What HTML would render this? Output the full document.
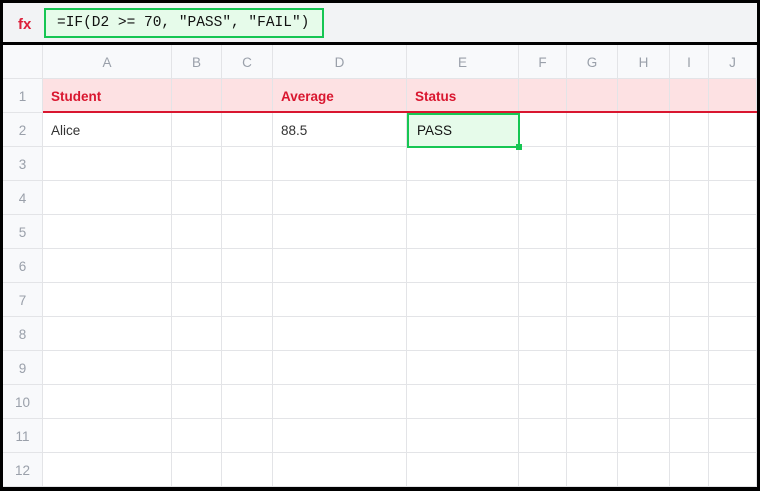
<!DOCTYPE html>
<html><head><meta charset="utf-8"><style>
*{margin:0;padding:0;box-sizing:border-box}
body{width:760px;height:491px;background:#000;position:relative;overflow:hidden;font-family:"Liberation Sans",sans-serif}
#fb{position:absolute;left:3px;top:3px;width:754px;height:39px;background:#f2f3f5}
#fx{position:absolute;left:15px;top:13px;color:#dc1f3a;font-weight:bold;font-size:15px}
#formula{position:absolute;left:44px;top:8px;width:280px;height:30px;border:2px solid #16c653;background:#e6fbea;font-family:"Liberation Mono",monospace;font-size:14.5px;line-height:27px;padding-left:11px;color:#111;white-space:nowrap;overflow:hidden}
#grid{position:absolute;left:3px;top:45px;width:754px;height:442px;background:#fff;overflow:hidden}
.c{position:absolute;border-right:1px solid #e3e4e7;border-bottom:1px solid #e3e4e7;font-size:13.5px;line-height:35px}
.h{background:#f8f9fb;color:#9aa0aa;text-align:center}
.r1{background:#fde1e3;color:#d9162f;font-weight:bold;padding-left:8px}
.d{color:#333;padding-left:8px}
</style></head><body>
<div id="fb"><div id="fx">fx</div></div>
<div id="formula">=IF(D2 &gt;= 70, "PASS", "FAIL")</div>
<div id="grid"></div>
<script>
var xs=[0,40,169,219,270,404,516,564,615,667,706,754];
var ys=[0,34,68,102,136,170,204,238,272,306,340,374,408,442];
var L="ABCDEFGHIJ",g=document.getElementById('grid'),h='';
var data={"1,1":"Student","1,4":"Average","1,5":"Status","2,1":"Alice","2,4":"88.5"};
for(var r=0;r<13;r++)for(var c=0;c<11;c++){
 var cls='c',t='';
 if(r==0||c==0){cls+=' h';t=r==0?(c?L[c-1]:''):r;}
 else if(r==1){cls+=' r1';t=data[r+','+c]||'';}
 else{cls+=' d';t=data[r+','+c]||'';}
 h+='<div class="'+cls+'" style="left:'+xs[c]+'px;top:'+ys[r]+'px;width:'+(xs[c+1]-xs[c])+'px;height:'+(ys[r+1]-ys[r])+'px">'+t+'</div>';
}
h+='<div style="position:absolute;left:40px;top:66px;width:714px;height:2px;background:#d9162f"></div>';
h+='<div style="position:absolute;left:404px;top:68px;width:113px;height:35px;border:2px solid #16c653;background:#e6fbea;font-size:13.5px;line-height:31px;padding-left:8px;color:#111">PASS</div>';
h+='<div style="position:absolute;left:513px;top:99px;width:6px;height:6px;background:#16c653"></div>';
g.innerHTML=h;
</script>
</body></html>
